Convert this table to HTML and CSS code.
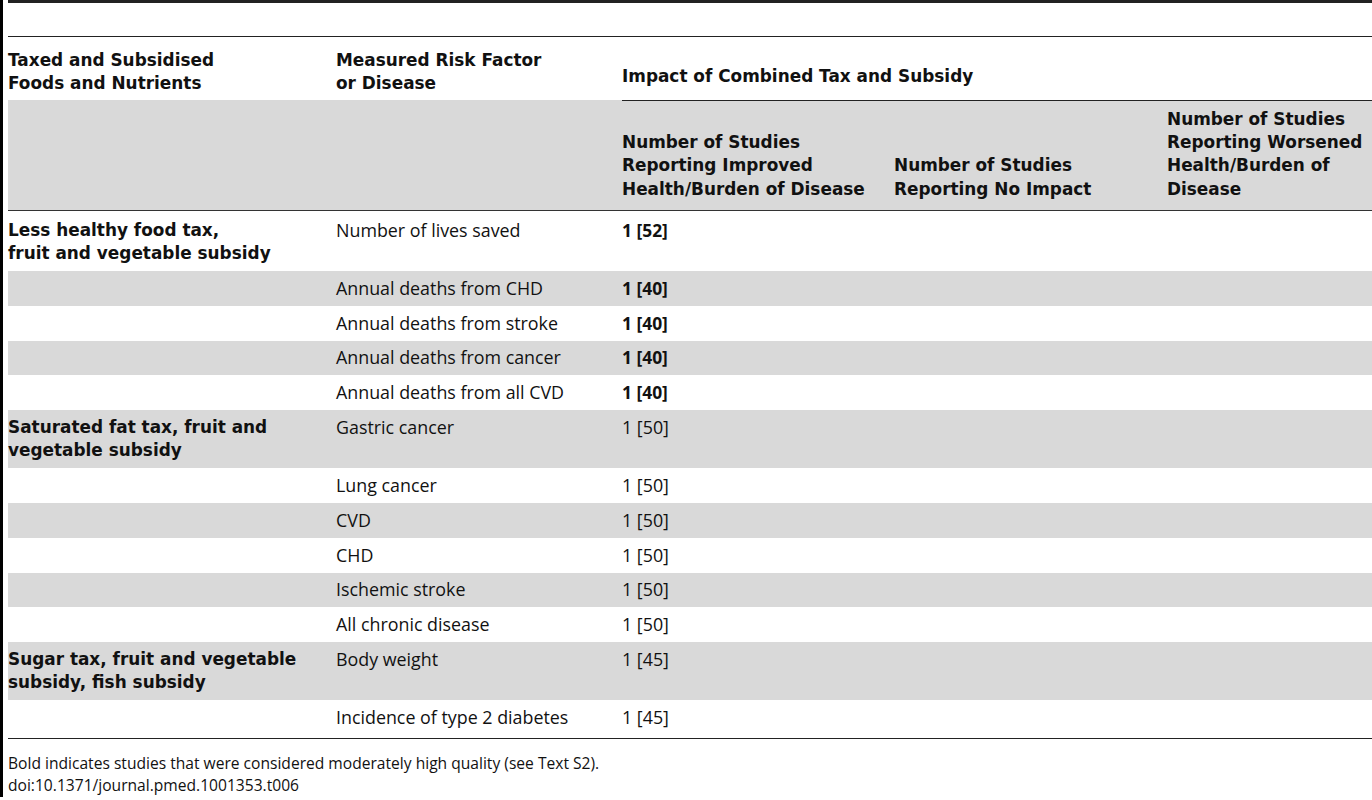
FILE: index.html
```html
<!DOCTYPE html>
<html>
<head>
<meta charset="utf-8">
<link rel="stylesheet" href="styles.css">
</head>
<body>
<div class="frame">
  <div class="topline"></div>
  <div class="spacer"></div>
  <table class="tbl">
    <colgroup>
      <col class="c1"><col class="c2"><col class="c3"><col class="c4"><col class="c5">
    </colgroup>
    <thead>
      <tr class="h1">
        <th>Taxed and Subsidised<br>Foods and Nutrients</th>
        <th>Measured Risk Factor<br>or Disease</th>
        <th colspan="3" class="impact">Impact of Combined Tax and Subsidy</th>
      </tr>
      <tr class="h2">
        <th></th>
        <th></th>
        <th>Number of Studies<br>Reporting Improved<br>Health/Burden of Disease</th>
        <th>Number of Studies<br>Reporting No Impact</th>
        <th>Number of Studies<br>Reporting Worsened<br>Health/Burden of<br>Disease</th>
      </tr>
    </thead>
    <tbody>
      <tr class="first">
        <td class="grp">Less healthy food tax,<br>fruit and vegetable subsidy</td>
        <td>Number of lives saved</td>
        <td class="b">1 [52]</td><td></td><td></td>
      </tr>
      <tr><td></td><td>Annual deaths from CHD</td><td class="b">1 [40]</td><td></td><td></td></tr>
      <tr><td></td><td>Annual deaths from stroke</td><td class="b">1 [40]</td><td></td><td></td></tr>
      <tr><td></td><td>Annual deaths from cancer</td><td class="b">1 [40]</td><td></td><td></td></tr>
      <tr><td></td><td>Annual deaths from all CVD</td><td class="b">1 [40]</td><td></td><td></td></tr>
      <tr>
        <td class="grp">Saturated fat tax, fruit and<br>vegetable subsidy</td>
        <td>Gastric cancer</td><td>1 [50]</td><td></td><td></td>
      </tr>
      <tr><td></td><td>Lung cancer</td><td>1 [50]</td><td></td><td></td></tr>
      <tr><td></td><td>CVD</td><td>1 [50]</td><td></td><td></td></tr>
      <tr><td></td><td>CHD</td><td>1 [50]</td><td></td><td></td></tr>
      <tr><td></td><td>Ischemic stroke</td><td>1 [50]</td><td></td><td></td></tr>
      <tr><td></td><td>All chronic disease</td><td>1 [50]</td><td></td><td></td></tr>
      <tr>
        <td class="grp">Sugar tax, fruit and vegetable<br>subsidy, fish subsidy</td>
        <td>Body weight</td><td>1 [45]</td><td></td><td></td>
      </tr>
      <tr class="last"><td></td><td>Incidence of type 2 diabetes</td><td>1 [45]</td><td></td><td></td></tr>
    </tbody>
  </table>
  <div class="foot">
    <p>Bold indicates studies that were considered moderately high quality (see Text S2).</p>
    <p>doi:10.1371/journal.pmed.1001353.t006</p>
  </div>
</div>
</body>
</html>
```
FILE: styles.css
```css
html, body {
  margin: 0;
  padding: 0;
  background: #fff;
  overflow: hidden;
}
body {
  font-family: "Open Sans", "Noto Sans", sans-serif;
  color: #111;
}
.frame {
  border-left: 3px solid #000;
  padding-left: 5px;
  height: 797px;
  box-sizing: border-box;
}
.topline {
  border-top: 3px solid #222;
}
.spacer {
  height: 33px;
}
.tbl {
  border-collapse: collapse;
  width: 1364px;
  table-layout: fixed;
  font-size: 17.85px;
  line-height: 23.2px;
  border-top: 1.5px solid #222;
}
.c1 { width: 328px; }
.c2 { width: 286px; }
.c3 { width: 272px; }
.c4 { width: 273px; }
.c5 { width: 205px; }
th, td.grp {
  font-family: "DejaVu Sans", "Open Sans", sans-serif;
  font-weight: 700;
  font-size: 16.9px;
}
td.b {
  font-family: "Open Sans", "Noto Sans", sans-serif;
  font-weight: 700;
  font-size: 17.4px;
}
th {
  text-align: left;
  padding: 0;
  white-space: nowrap;
}
.h1 th {
  vertical-align: bottom;
  padding-top: 12px;
  padding-bottom: 5px;
}
.h1 th.impact {
  padding-bottom: 11.5px;
  border-bottom: 1px solid #222;
}
.h2 th {
  background: #d9d9d9;
  vertical-align: bottom;
  padding-top: 7px;
  padding-bottom: 9.5px;
  border-bottom: 1.5px solid #333;
}
td {
  vertical-align: top;
  padding: 5.8px 6px 5.8px 0;
  white-space: nowrap;
}
tbody tr:nth-child(even) td {
  background: #d9d9d9;
}
tr.first td {
  padding-top: 7.5px;
}
tr.last td {
  padding-bottom: 9px;
  border-bottom: 1.5px solid #222;
}
.foot {
  padding-top: 14px;
  font-size: 15.6px;
  line-height: 21.5px;
}
.foot p {
  margin: 0;
}
```
